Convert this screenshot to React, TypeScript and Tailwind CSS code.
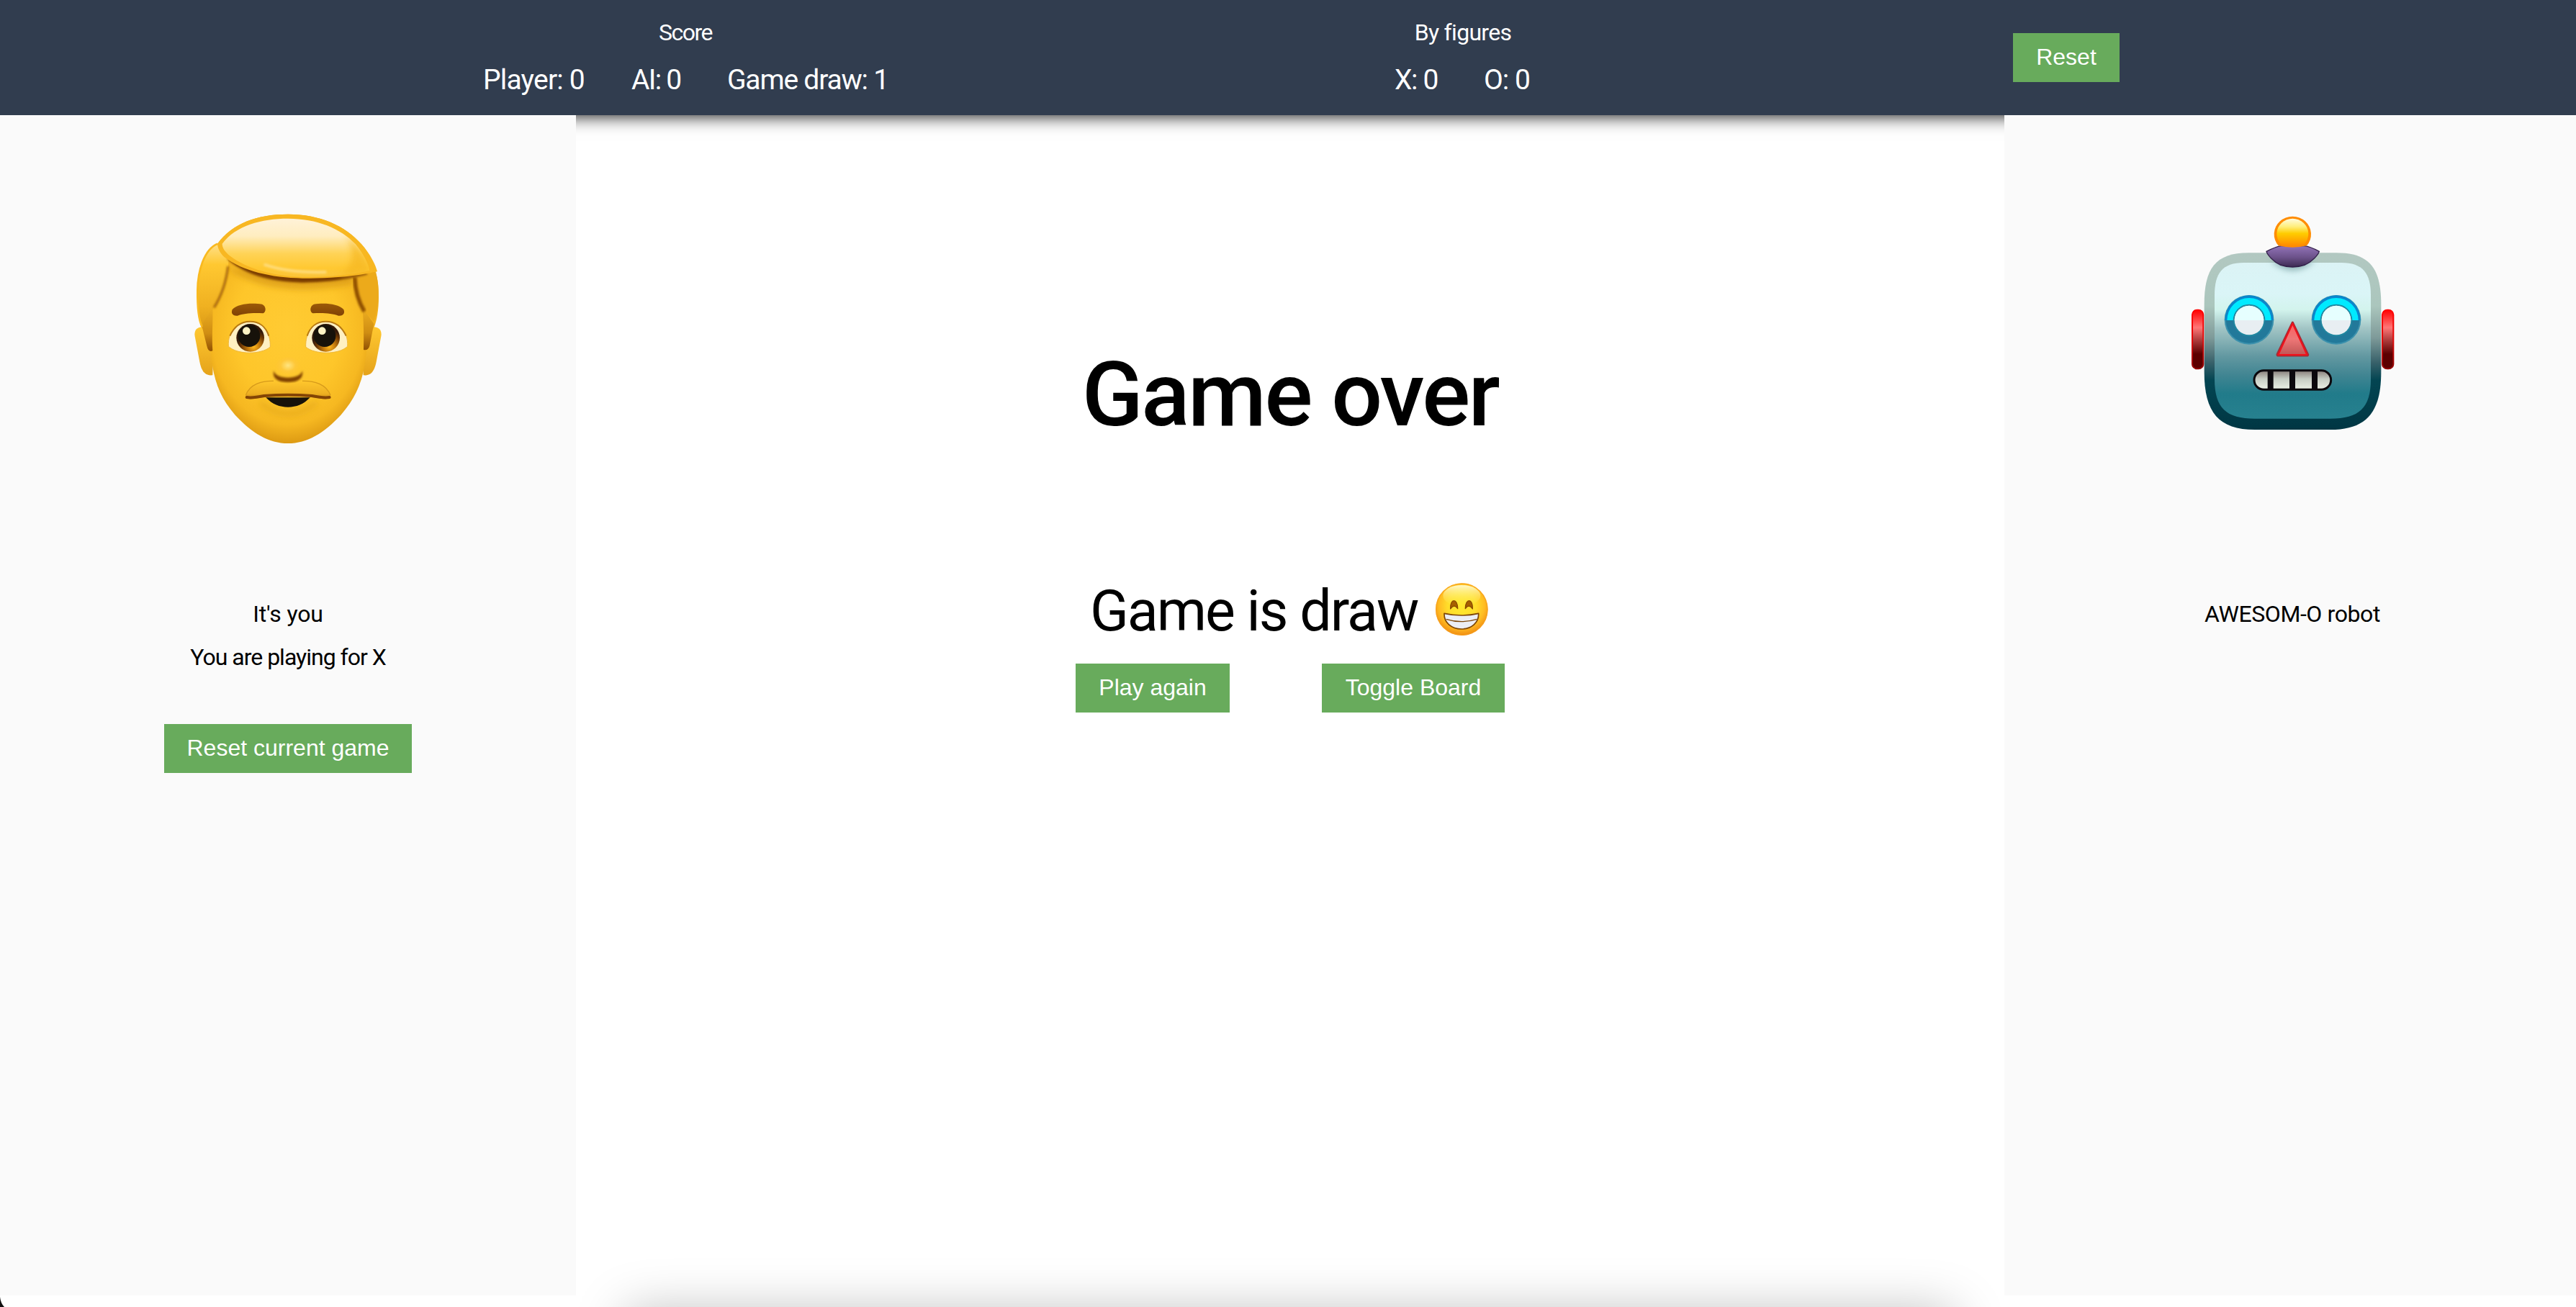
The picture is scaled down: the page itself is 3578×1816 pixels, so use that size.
import type { ReactNode } from "react";

function ManFace() {
  return (
    <svg viewBox="0 0 960 1110" className="block h-[370px] w-[320px]" aria-label="Player">
      <defs>
        <radialGradient id="skin" gradientUnits="userSpaceOnUse" cx="480" cy="560" r="500" gradientTransform="translate(480 560) scale(.8 1) translate(-480 -560)">
          <stop offset="0" stopColor="#ffcb33" />
          <stop offset=".55" stopColor="#fec62a" />
          <stop offset=".8" stopColor="#f6b821" />
          <stop offset="1" stopColor="#d6920f" />
        </radialGradient>
        <linearGradient id="hairTop" x1="0" y1="0" x2="0" y2="1">
          <stop offset="0" stopColor="#fff2d8" />
          <stop offset=".3" stopColor="#ffedc0" />
          <stop offset=".6" stopColor="#ffd356" />
          <stop offset=".85" stopColor="#ffc831" />
          <stop offset="1" stopColor="#fbc43a" />
        </linearGradient>
        <linearGradient id="hairSide" x1="0" y1="0" x2="0" y2="1">
          <stop offset="0" stopColor="#ffe08a" />
          <stop offset=".25" stopColor="#ffc831" />
          <stop offset=".75" stopColor="#f0b121" />
          <stop offset="1" stopColor="#dc9c17" />
        </linearGradient>
        <linearGradient id="ear" x1="0" y1="0" x2="0" y2="1">
          <stop offset="0" stopColor="#ffc831" />
          <stop offset="1" stopColor="#e5a31a" />
        </linearGradient>
        <linearGradient id="burn" x1="0" y1="0" x2="0" y2="1">
          <stop offset="0" stopColor="#eeb022" />
          <stop offset=".6" stopColor="#cf8d12" />
          <stop offset="1" stopColor="#925103" />
        </linearGradient>
        <linearGradient id="brow" x1="0" y1="0" x2="0" y2="1">
          <stop offset="0" stopColor="#9b5a08" />
          <stop offset="1" stopColor="#804205" />
        </linearGradient>
        <radialGradient id="iris" cx=".62" cy=".82" r=".6">
          <stop offset="0" stopColor="#ffb91f" />
          <stop offset=".35" stopColor="#c47a0c" />
          <stop offset=".75" stopColor="#6b3603" />
          <stop offset="1" stopColor="#33190a" />
        </radialGradient>
        <radialGradient id="noseTip" cx=".5" cy=".4" r=".55">
          <stop offset="0" stopColor="#ffe480" />
          <stop offset=".5" stopColor="#fec83a" />
          <stop offset="1" stopColor="#fec52c" stopOpacity="0" />
        </radialGradient>
        <linearGradient id="mustache" x1="0" y1="0" x2="0" y2="1">
          <stop offset="0" stopColor="#ffc72d" />
          <stop offset=".7" stopColor="#eeb022" />
          <stop offset="1" stopColor="#c98710" />
        </linearGradient>
        <filter id="soft4" x="-20%" y="-40%" width="140%" height="180%"><feGaussianBlur stdDeviation="4" /></filter>
        <filter id="soft12" x="-20%" y="-60%" width="140%" height="220%"><feGaussianBlur stdDeviation="13" /></filter>
        <clipPath id="headClip">
          <path d="M150 300 H810 L812 640 C800 760 770 840 700 920 C630 995 560 1038 480 1038 C400 1038 330 995 260 920 C190 840 165 760 155 640 Z" />
        </clipPath>
      </defs>
      <path d="M124 553 C98 553 88 570 92 592 L112 698 C120 738 134 757 166 754 L172 553 Z" fill="url(#ear)" />
      <path d="M836 553 C862 553 872 570 868 592 L848 698 C840 738 826 757 794 754 L788 553 Z" fill="url(#ear)" />
      <path d="M186 206 C250 120 350 83 480 83 C610 83 720 130 786 208 C840 270 858 340 858 430 C858 480 850 530 838 556 L780 640 L180 640 L120 556 C106 520 102 470 103 400 C104 320 130 230 186 206 Z" fill="#f3b220" />
      <path d="M160 300 H800 L808 640 C800 760 770 840 700 920 C630 995 560 1038 480 1038 C400 1038 330 995 260 920 C190 840 165 760 157 640 Z" fill="url(#skin)" />
      <g clipPath="url(#headClip)">
        <path d="M228 310 C330 380 450 398 560 396 C640 394 710 385 756 372 L740 310 Z" fill="#d99a14" opacity=".75" filter="url(#soft12)" />
        <path d="M365 868 Q480 960 600 868" fill="none" stroke="#dda018" strokeWidth="18" opacity=".6" filter="url(#soft12)" />
      </g>
      <path d="M130 520 L166 470 C168 530 162 590 166 652 Q148 660 142 632 L122 552 Z" fill="url(#burn)" />
      <path d="M838 540 L790 470 C796 530 796 590 795 648 Q814 652 820 632 Z" fill="url(#burn)" />
      <path d="M186 206 C130 230 104 320 103 400 C102 470 106 520 122 552 C130 520 150 500 172 470 C210 410 232 350 232 280 C225 240 205 215 186 206 Z" fill="url(#hairSide)" />
      <path d="M186 206 C130 230 104 320 103 400 C102 470 106 520 122 552" fill="none" stroke="#f9b91f" strokeWidth="8" />
      <path d="M230 300 C222 370 205 420 172 472" fill="none" stroke="#a46308" strokeWidth="9" filter="url(#soft4)" />
      <path d="M750 340 C755 420 775 455 800 490 L838 530 C852 490 858 450 857 400 C856 360 848 330 838 310 Z" fill="#ecaa1b" />
      <path d="M758 345 C760 410 775 450 798 488" fill="none" stroke="#8f5004" strokeWidth="17" filter="url(#soft4)" />
      <path d="M225 268 C290 330 400 366 540 368 C650 368 750 350 812 334 L800 318 L300 270 Z" fill="#7b3c02" filter="url(#soft4)" />
      <path d="M186 206 C250 120 350 83 480 83 C610 83 720 130 786 208 C820 245 844 290 852 322 C750 344 640 352 540 350 C410 348 290 320 215 262 C195 242 187 224 186 206 Z" fill="#f8b722" />
      <path d="M206 206 C262 130 370 101 480 101 C600 101 700 142 762 208 C795 248 815 290 820 318 C740 336 640 346 540 344 C420 342 310 310 240 258 C215 238 206 222 206 206 Z" fill="url(#hairTop)" />
      <path d="M720 170 C790 230 812 290 824 322 C780 332 730 338 690 340 C760 300 760 230 720 170 Z" fill="#f6b824" opacity=".75" filter="url(#soft12)" />
      <path d="M380 292 Q480 328 640 324" fill="none" stroke="#ffe08a" strokeWidth="12" opacity=".8" filter="url(#soft4)" />
      <path d="M248 480 C270 455 330 451 372 458 C390 466 390 490 376 496 C330 493 295 497 270 506 C248 508 242 494 248 480 Z" fill="url(#brow)" />
      <path d="M712 480 C690 455 630 451 588 458 C570 466 570 490 584 496 C630 493 665 497 690 506 C712 508 718 494 712 480 Z" fill="url(#brow)" />
      <path d="M232 634 C228 570 270 530 322 530 C376 530 408 575 406 636 C370 668 270 670 232 634 Z" fill="#fff0c2" stroke="#f0b838" strokeWidth="3" />
      <path d="M728 634 C732 570 690 530 638 530 C584 530 552 575 554 636 C590 668 690 670 728 634 Z" fill="#fff0c2" stroke="#f0b838" strokeWidth="3" />
      <path d="M238 590 C258 546 290 530 322 530 C360 530 388 552 400 590" fill="none" stroke="#b87910" strokeWidth="6" />
      <path d="M722 590 C702 546 670 530 638 530 C600 530 572 552 560 590" fill="none" stroke="#b87910" strokeWidth="6" />
      <circle cx="323" cy="598" r="58" fill="url(#iris)" />
      <circle cx="318" cy="590" r="46" fill="#17120a" />
      <circle cx="307" cy="569" r="16" fill="#fff3c4" />
      <circle cx="638" cy="598" r="58" fill="url(#iris)" />
      <circle cx="633" cy="590" r="46" fill="#17120a" />
      <circle cx="622" cy="569" r="16" fill="#fff3c4" />
      <path d="M420 735 C425 755 450 763 480 764 C510 763 535 755 540 735 C545 770 520 783 480 783 C440 783 415 770 420 735 Z" fill="#7f4103" filter="url(#soft4)" />
      <ellipse cx="480" cy="722" rx="55" ry="44" fill="url(#noseTip)" />
      <path d="M304 836 C320 790 370 775 420 778 Q480 800 540 778 C600 775 645 795 657 836 C655 850 640 856 620 852 Q480 828 340 852 C318 856 304 852 304 836 Z" fill="url(#mustache)" />
      <path d="M304 838 C320 792 370 777 420 778" fill="none" stroke="#d69a1b" strokeWidth="4" />
      <path d="M657 838 C640 792 590 777 540 778" fill="none" stroke="#d69a1b" strokeWidth="4" />
      <path d="M308 846 Q330 850 380 840 Q480 832 580 840 Q630 850 653 846" fill="none" stroke="#834405" strokeWidth="12" strokeLinecap="round" />
      <path d="M388 847 Q480 846 572 847 C545 876 515 887 480 887 C445 887 415 876 388 847 Z" fill="#17120a" />
    </svg>
  );
}

function RobotEye({ cx }: { cx: number }) {
  return (
    <g>
      <circle cx={cx} cy="493" r="103" fill="#3b91ad" />
      <circle cx={cx} cy="493" r="97" fill="#22799a" />
      <path d={`M${cx - 101} 495 A101 104 0 0 1 ${cx + 101} 495 Z`} fill="#0b86cb" />
      <path d={`M${cx - 92} 495 A92 93 0 0 1 ${cx + 92} 495 Z`} fill="#00eaff" />
      <circle cx={cx} cy="495" r="67" fill="#2187a0" />
      <circle cx={cx} cy="495" r="61" fill="#e8eef2" />
      <path d={`M${cx - 61} 495 A61 61 0 0 1 ${cx + 61} 495 Z`} fill="#e6ffff" />
    </g>
  );
}

function RobotFace() {
  return (
    <svg viewBox="0 0 990 1020" className="ml-0.5 block h-[340px] w-[330px]" aria-label="Robot">
      <defs>
        <linearGradient id="shell" x1="0" y1="0" x2="0" y2="1">
          <stop offset="0" stopColor="#b2c8c1" />
          <stop offset=".3" stopColor="#abc6bd" />
          <stop offset=".48" stopColor="#7e9a99" />
          <stop offset=".62" stopColor="#38616a" />
          <stop offset=".72" stopColor="#034552" />
          <stop offset="1" stopColor="#003643" />
        </linearGradient>
        <linearGradient id="plate" x1="0" y1="0" x2="0" y2="1">
          <stop offset="0" stopColor="#dbf3f5" />
          <stop offset=".2" stopColor="#daf5f7" />
          <stop offset=".3" stopColor="#d3f4ed" />
          <stop offset=".42" stopColor="#a2c5c5" />
          <stop offset=".6" stopColor="#6298a1" />
          <stop offset=".72" stopColor="#418592" />
          <stop offset=".84" stopColor="#217b8a" />
          <stop offset="1" stopColor="#27818f" />
        </linearGradient>
        <linearGradient id="earRed" x1="0" y1="0" x2="0" y2="1">
          <stop offset="0" stopColor="#ff0000" />
          <stop offset=".3" stopColor="#ff7777" />
          <stop offset=".5" stopColor="#b34040" />
          <stop offset=".75" stopColor="#5c0000" />
          <stop offset="1" stopColor="#5c0000" />
        </linearGradient>
        <linearGradient id="earEdge" x1="0" y1="0" x2="0" y2="1">
          <stop offset="0" stopColor="#ff0000" />
          <stop offset=".5" stopColor="#e30a0a" />
          <stop offset="1" stopColor="#8f0000" />
        </linearGradient>
        <linearGradient id="bulb" x1="0" y1="0" x2="0" y2="1">
          <stop offset="0" stopColor="#fffce0" />
          <stop offset=".3" stopColor="#ffee7a" />
          <stop offset=".55" stopColor="#ffcc00" />
          <stop offset="1" stopColor="#ff8c00" />
        </linearGradient>
        <linearGradient id="cap" x1="0" y1="0" x2="0" y2="1">
          <stop offset="0" stopColor="#9273b8" />
          <stop offset=".55" stopColor="#6b5189" />
          <stop offset="1" stopColor="#3d2a52" />
        </linearGradient>
        <linearGradient id="noseRed" x1="0" y1="0" x2="0" y2="1">
          <stop offset="0" stopColor="#ff5c5c" />
          <stop offset=".5" stopColor="#ee7777" />
          <stop offset="1" stopColor="#bd5454" />
        </linearGradient>
        <linearGradient id="teeth" x1="0" y1="0" x2="0" y2="1">
          <stop offset="0" stopColor="#877c78" />
          <stop offset=".45" stopColor="#c7cdc4" />
          <stop offset="1" stopColor="#ebf0e6" />
        </linearGradient>
        <filter id="glow" x="-40%" y="-80%" width="180%" height="260%"><feGaussianBlur stdDeviation="12" /></filter>
      </defs>
      <rect x="75" y="452" width="46" height="245" rx="20" fill="url(#earRed)" stroke="url(#earEdge)" strokeWidth="6" />
      <rect x="867" y="452" width="46" height="245" rx="20" fill="url(#earRed)" stroke="url(#earEdge)" strokeWidth="6" />
      <path d="M125 430 C125 280 170 214 310 214 H676 C816 214 862 280 862 430 V710 C862 880 800 951 650 951 H336 C186 951 125 880 125 710 Z" fill="url(#shell)" />
      <path d="M168 390 C168 300 200 255 290 255 H696 C786 255 819 300 819 390 V740 C819 860 770 905 650 905 H336 C216 905 168 860 168 740 Z" fill="url(#plate)" />
      <path d="M400 245 Q493 330 586 245 Z" fill="#6f9a9c" opacity=".7" filter="url(#glow)" />
      <path d="M384 208 C410 195 430 187 445 185 H542 C560 187 580 195 604 208 C600 222 575 250 545 264 Q493 282 441 264 C412 250 388 222 384 208 Z" fill="url(#cap)" stroke="#33204a" strokeWidth="4" />
      <path d="M434 184 A77 74 0 1 1 552 184 Q493 198 434 184 Z" fill="#ff8c00" />
      <path d="M444 178 A66 64 0 1 1 542 178 Q493 190 444 178 Z" fill="url(#bulb)" />
      <RobotEye cx={312} />
      <RobotEye cx={675} />
      <path d="M493 504 L557 638 Q557 642 552 642 H434 Q428 642 429 637 Z" fill="url(#noseRed)" stroke="#a32d36" strokeWidth="9" strokeLinejoin="round" />
      <path d="M493 508 L553 639 H433 Z" fill="none" stroke="#f2101a" strokeWidth="6" strokeLinejoin="round" />
      <rect x="333" y="704" width="320" height="80" rx="40" fill="url(#teeth)" stroke="#0b080d" strokeWidth="9" />
      <path d="M389 704 H413 V784 H389 Z M480 704 H504 V784 H480 Z M573 704 H597 V784 H573 Z" fill="#0b080d" />
    </svg>
  );
}

function GrinFace() {
  return (
    <svg viewBox="60 48 240 240" className="mt-[18px] block size-20 shrink-0" aria-label="Grin">
      <defs>
        <radialGradient id="grinBase" gradientUnits="userSpaceOnUse" cx="181" cy="150" r="132">
          <stop offset="0" stopColor="#ffea2e" />
          <stop offset=".45" stopColor="#ffdd2b" />
          <stop offset=".72" stopColor="#ffbc22" />
          <stop offset="1" stopColor="#ee8310" />
        </radialGradient>
        <linearGradient id="grinShine" x1="0" y1="0" x2="0" y2="1">
          <stop offset="0" stopColor="#fffbd0" stopOpacity=".95" />
          <stop offset="1" stopColor="#ffee50" stopOpacity="0" />
        </linearGradient>
      </defs>
      <circle cx="181" cy="167" r="109" fill="url(#grinBase)" />
      <circle cx="181" cy="167" r="107" fill="none" stroke="#f7a01c" strokeWidth="4" opacity=".7" />
      <ellipse cx="181" cy="110" rx="78" ry="44" fill="url(#grinShine)" />
      <path d="M134 165 C132 120 164 120 164 164 Q149 142 134 165 Z" fill="#a65f00" stroke="#8a4b00" strokeWidth="4" strokeLinejoin="round" />
      <path d="M196 164 C196 120 228 120 226 165 Q211 142 196 164 Z" fill="#a65f00" stroke="#8a4b00" strokeWidth="4" strokeLinejoin="round" />
      <path d="M108 184 Q180 200 251 184 C253 222 222 249 180 249 C138 249 106 222 108 184 Z" fill="#eceef5" stroke="#7d4505" strokeWidth="5" strokeLinejoin="round" />
      <path d="M116 208 Q180 228 244 208" fill="none" stroke="#7d4505" strokeWidth="4" />
    </svg>
  );
}

function Button({ children, className }: { children: ReactNode; className: string }) {
  return (
    <button
      type="button"
      className={`flex h-[68px] items-center justify-center bg-[#68ab5c] pb-[3px] font-['Liberation_Sans',sans-serif] text-[32px] whitespace-nowrap text-white ${className}`}
    >
      {children}
    </button>
  );
}

export default function App() {
  return (
    <div className="relative h-[1816px] w-full overflow-hidden bg-white font-[Roboto,sans-serif] text-[32px] whitespace-nowrap text-black">
      <header className="relative z-10 flex h-40 w-[3584px] bg-[#313d4f] pl-[669px] text-white shadow-[0_0_24px_#000]">
        <section className="w-[566px] pt-[17px]">
          <h2 className="text-center leading-[56px] tracking-[-1.5px]">Score</h2>
          <div className="mt-1.5 flex pl-0.5 text-[39px] leading-[64px]">
            <span className="mr-16 w-[142px] tracking-[-0.8px]">Player: 0</span>
            <span className="mr-16 w-[69px] tracking-[-1.7px]">AI: 0</span>
            <span className="tracking-[-1.2px]">Game draw: 1</span>
          </div>
        </section>
        <section className="ml-[702px] w-[190px] pt-[17px]">
          <h2 className="text-center leading-[56px] tracking-[-0.7px]">By figures</h2>
          <div className="mt-1.5 flex text-[39px] leading-[64px]">
            <span className="mr-16 w-[60px] tracking-[-1.35px]">X: 0</span>
            <span className="tracking-[-1px]">O: 0</span>
          </div>
        </section>
        <Button className="mt-[46px] ml-[669px] w-[148px]">Reset</Button>
      </header>

      <div className="flex h-[1640px] w-[3584px]">
        <aside className="relative z-20 flex w-[800px] flex-col items-center bg-[#fafafa] pt-[110px]">
          <ManFace />
          <p className="mt-[183px] leading-[60px] tracking-[-0.15px]">It's you</p>
          <p className="leading-[60px] tracking-[-1px]">You are playing for X</p>
          <Button className="mt-[63px] w-[344px]">Reset current game</Button>
        </aside>

        <main className="flex w-[1984px] flex-col items-center pt-[293px]">
          <h1 className="text-[125px] leading-[192px] font-medium tracking-[-2.6px]">Game over</h1>
          <div className="mt-36 flex">
            <p className="w-[476px] text-[79px] leading-[120px] tracking-[-2px]">Game is draw</p>
            <GrinFace />
          </div>
          <div className="mt-[13px] flex gap-32">
            <Button className="w-[214px]">Play again</Button>
            <Button className="w-[254px]">Toggle Board</Button>
          </div>
        </main>

        <aside className="relative z-20 flex w-[800px] flex-col items-center bg-[#fafafa] pt-[120px]">
          <RobotFace />
          <p className="mt-[203px] leading-[60px] tracking-[-0.4px]">AWESOM-O robot</p>
        </aside>
      </div>

      <div className="absolute top-[1822px] left-[870px] h-40 w-[1844px] shadow-[0_0_70px_rgba(0,0,0,0.26)]" />
      <svg viewBox="0 0 6 14" className="absolute bottom-0 left-0 h-3.5 w-1.5">
        <path d="M0 0 Q1 9 6 14 H0 Z" fill="#111" />
      </svg>
    </div>
  );
}
